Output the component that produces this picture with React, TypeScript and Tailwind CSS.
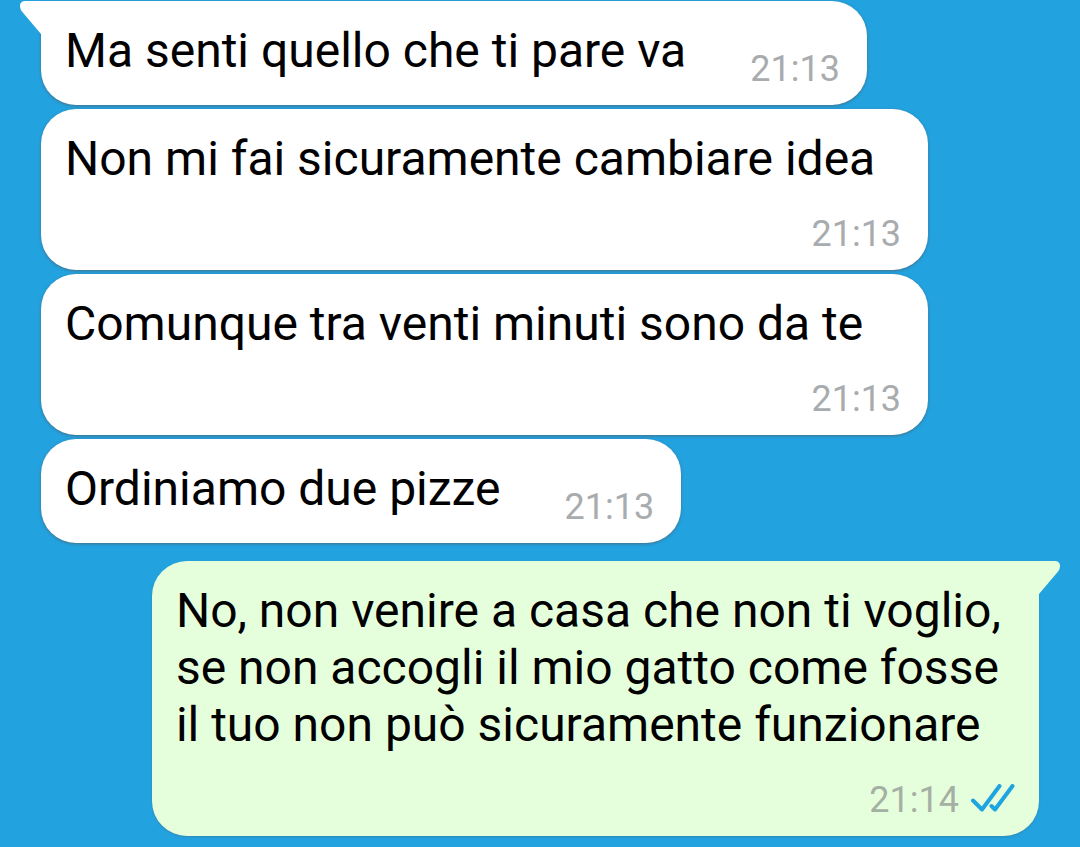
import React from "react";

type Message = {
  text: string;
  time: string;
  stacked?: boolean;
};

const received: Message[] = [
  { text: "Ma senti quello che ti pare va", time: "21:13" },
  { text: "Non mi fai sicuramente cambiare idea", time: "21:13", stacked: true },
  { text: "Comunque tra venti minuti sono da te", time: "21:13", stacked: true },
  { text: "Ordiniamo due pizze", time: "21:13" },
];

const Tail = ({ className }: { className: string }) => (
  <svg
    viewBox="0 0 24 36"
    aria-hidden="true"
    className={`absolute top-0 h-9 w-6 ${className}`}
  >
    <path d="M24 0H5C0 0-1.500 5 1.500 10L21 33H24Z" fill="currentColor" />
  </svg>
);

const ReadTicks = () => (
  <svg
    viewBox="0 0 44 32"
    role="img"
    aria-label="Letto"
    className="h-8 w-11 text-[#1ea5e0]"
    fill="none"
    stroke="currentColor"
    strokeWidth="4"
    strokeLinecap="round"
    strokeLinejoin="round"
  >
    <path d="M2 16.500L11 25.500L28.500 2" />
    <path d="M20.500 22L24 25.500L41.500 2" />
  </svg>
);

const Received = ({ message, first }: { message: Message; first: boolean }) => (
  <li
    className={`relative flex rounded-[35px] bg-white pt-[21px] pr-[27px] pb-4 pl-6 shadow-[0_1px_3px_rgba(90,80,80,0.6)] ${
      message.stacked ? "w-8/9 flex-col gap-[27px]" : "items-end gap-16"
    } ${first ? "rounded-tl-none" : ""}`}
  >
    {first && <Tail className="-left-[21px] text-white" />}
    <p className={message.stacked ? "" : "pb-[10px]"}>{message.text}</p>
    <time className="self-end text-4xl text-[#a9acae]">{message.time}</time>
  </li>
);

const App = () => {
  return (
    <main className="min-h-screen overflow-hidden bg-[#22a2df] px-[41px] pt-px font-['Roboto',sans-serif] text-5xl leading-[57px] text-black">
      <ul className="flex flex-col items-start gap-1">
        {received.map((message, index) => (
          <Received key={message.text} message={message} first={index === 0} />
        ))}
        <li className="relative mt-3.5 flex w-8/9 flex-col gap-[27px] self-end rounded-[35px] rounded-tr-none bg-[#e5ffdc] px-6 pt-[21px] pb-4 shadow-[0_1px_2px_rgba(90,80,80,0.3)]">
          <Tail className="-right-[21px] -scale-x-100 text-[#e5ffdc]" />
          <p>
            No, non venire a casa che non ti voglio,
            <br />
            se non accogli il mio gatto come fosse
            <br />
            il tuo non può sicuramente funzionare
          </p>
          <div className="flex items-center gap-3 self-end text-[#a5b0a4]">
            <time className="text-4xl">21:14</time>
            <ReadTicks />
          </div>
        </li>
      </ul>
    </main>
  );
};

export default App;
